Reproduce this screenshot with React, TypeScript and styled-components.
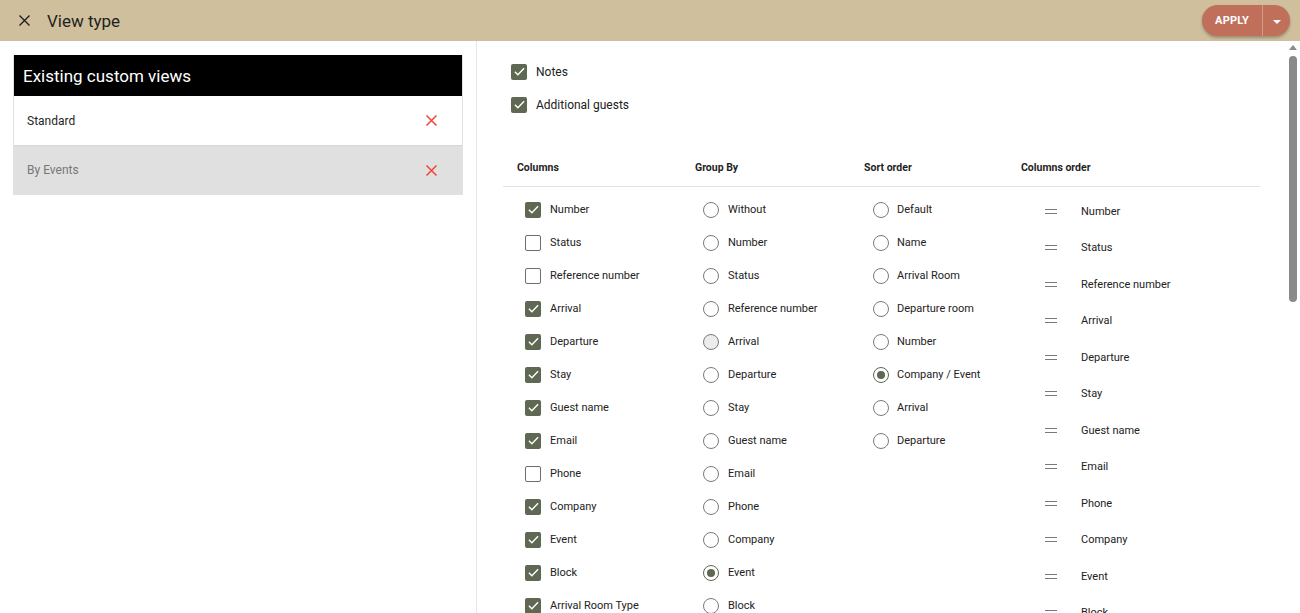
import React from 'react';
import styled, { createGlobalStyle } from 'styled-components';

const GlobalStyle = createGlobalStyle`
  html, body {
    margin: 0;
    padding: 0;
    height: 100%;
    overflow: hidden;
  }
  body {
    font-family: Roboto, "Liberation Sans", Arial, sans-serif;
    color: #212121;
    background: #fff;
  }
`;

const Page = styled.div`
  display: flex;
  flex-direction: column;
  height: 100vh;
`;

const TopBar = styled.header`
  height: 41px;
  flex: 0 0 41px;
  background: #cfbf9d;
  display: flex;
  align-items: center;
  padding: 0 10px 0 16px;
  box-sizing: border-box;
`;

const CloseButton = styled.button`
  border: 0;
  background: none;
  padding: 0;
  width: 16px;
  height: 16px;
  display: flex;
  align-items: center;
  justify-content: center;
  cursor: pointer;
`;

const Title = styled.h1`
  margin: 0 0 0 15px;
  font-size: 17px;
  font-weight: 400;
  color: #1f1f1f;
  flex: 1;
`;

const SplitButton = styled.div`
  display: flex;
  height: 31px;
  border-radius: 16px;
  background: #c0705a;
  box-shadow: 0 2px 3px rgba(0, 0, 0, 0.25);
  overflow: hidden;
`;

const ApplyButton = styled.button`
  border: 0;
  background: none;
  color: #fff;
  font-family: inherit;
  font-weight: 700;
  font-size: 11px;
  letter-spacing: 0.2px;
  padding: 0 13px 0 13px;
  border-right: 1px solid rgba(255, 255, 255, 0.3);
`;

const ArrowButton = styled.button`
  border: 0;
  background: none;
  width: 27px;
  display: flex;
  align-items: center;
  justify-content: center;
  padding: 0;
`;

const Caret = styled.span`
  width: 0;
  height: 0;
  border-left: 4px solid transparent;
  border-right: 4px solid transparent;
  border-top: 4px solid #fff;
  margin-top: 2px;
`;

const Body = styled.div`
  flex: 1;
  display: flex;
  min-height: 0;
`;

const Sidebar = styled.aside`
  width: 477px;
  flex: 0 0 477px;
  border-right: 1px solid #e6e6e6;
  padding: 14px 13px 0 13px;
  box-sizing: border-box;
`;

const ViewsCard = styled.section`
  border: 1px solid #e2e2e2;
  border-top: 0;
`;

const ViewsHeader = styled.h2`
  margin: 0;
  background: #000;
  color: #fff;
  height: 41px;
  display: flex;
  align-items: center;
  padding-left: 9px;
  font-size: 17px;
  font-weight: 400;
`;

const ViewRow = styled.div<{ $active?: boolean }>`
  height: 49px;
  display: flex;
  align-items: center;
  justify-content: space-between;
  padding: 0 23px 0 13px;
  font-size: 12px;
  background: ${(p) => (p.$active ? '#e0e0e0' : '#fff')};
  color: ${(p) => (p.$active ? '#777' : '#1f1f1f')};
  & + & {
    border-top: 1px solid #d6d6d6;
    height: 48px;
  }
`;

const Main = styled.main`
  flex: 1;
  display: flex;
  min-width: 0;
  overflow: hidden;
`;

const Content = styled.div`
  flex: 1;
  padding: 14px 27px 0 26px;
  min-width: 0;
`;

const Rail = styled.div`
  width: 12px;
  flex: 0 0 12px;
  display: flex;
  flex-direction: column;
  align-items: center;
  padding-top: 4px;
  margin-right: 1px;
`;

const RailArrow = styled.span`
  width: 0;
  height: 0;
  border-left: 4px solid transparent;
  border-right: 4px solid transparent;
  border-bottom: 5px solid #8a8a8a;
`;

const Thumb = styled.div`
  margin-top: 6px;
  width: 8px;
  height: 246px;
  border-radius: 4px;
  background: #8a8a8a;
`;

const Options = styled.div`
  padding-left: 8px;
`;

const OptionRow = styled.label<{ $size?: number }>`
  height: 33px;
  display: flex;
  align-items: center;
  font-size: ${(p) => p.$size ?? 12}px;
  color: #222;
  gap: 9px;
`;

const Box = styled.span<{ $checked?: boolean }>`
  width: 16px;
  height: 16px;
  box-sizing: border-box;
  border-radius: 2px;
  border: ${(p) => (p.$checked ? 'none' : '1.5px solid #6e6e6e')};
  background: ${(p) => (p.$checked ? '#5e6852' : '#fff')};
  display: inline-flex;
  align-items: center;
  justify-content: center;
  flex: 0 0 16px;
`;

const Radio = styled.span<{ $checked?: boolean; $hover?: boolean }>`
  width: 16px;
  height: 16px;
  box-sizing: border-box;
  border-radius: 50%;
  border: 1.5px solid ${(p) => (p.$checked ? '#5e6852' : '#7a7a7a')};
  background: ${(p) => (p.$hover ? '#ececec' : '#fff')};
  display: inline-flex;
  align-items: center;
  justify-content: center;
  flex: 0 0 16px;
  &::after {
    content: '';
    width: 8px;
    height: 8px;
    border-radius: 50%;
    background: #5e6852;
    display: ${(p) => (p.$checked ? 'block' : 'none')};
  }
`;

const Table = styled.div`
  margin-top: 27px;
`;

const HeadRow = styled.div`
  height: 38px;
  border-bottom: 1px solid #e3e3e3;
  display: grid;
  grid-template-columns: 178px 169px 157px 1fr;
  align-items: center;
  padding-left: 14px;
  font-size: 10.5px;
  font-weight: 700;
  color: #1f1f1f;
`;

const Columns = styled.div`
  display: grid;
  grid-template-columns: 178px 169px 157px 1fr;
  padding: 6px 0 0 14px;
`;

const Col = styled.div<{ $indent: number }>`
  padding-left: ${(p) => p.$indent}px;
  display: flex;
  flex-direction: column;
`;

const ColLabel = styled.span<{ $gap: number }>`
  margin-left: ${(p) => p.$gap}px;
`;

const OrderRow = styled.div`
  height: 36.5px;
  display: flex;
  align-items: center;
  font-size: 11px;
  color: #222;
`;

const Handle = styled.span`
  width: 12px;
  height: 5px;
  border-top: 1.5px solid #7a7a7a;
  border-bottom: 1.5px solid #7a7a7a;
  margin-right: 24px;
  box-sizing: border-box;
`;

const Check = () => (
  <svg width="13" height="13" viewBox="0 0 24 24" fill="none">
    <path d="M3.5 12.5l5.5 5.5L20.5 6" stroke="#fff" strokeWidth="2.6" />
  </svg>
);

const XIcon = ({ color, size, weight = 2.2 }: { color: string; size: number; weight?: number }) => (
  <svg width={size} height={size} viewBox="0 0 24 24" fill="none">
    <path d="M4 4l16 16M20 4L4 20" stroke={color} strokeWidth={weight} />
  </svg>
);

const columnItems: [string, boolean][] = [
  ['Number', true],
  ['Status', false],
  ['Reference number', false],
  ['Arrival', true],
  ['Departure', true],
  ['Stay', true],
  ['Guest name', true],
  ['Email', true],
  ['Phone', false],
  ['Company', true],
  ['Event', true],
  ['Block', true],
  ['Arrival Room Type', true],
];

const groupItems = [
  'Without',
  'Number',
  'Status',
  'Reference number',
  'Arrival',
  'Departure',
  'Stay',
  'Guest name',
  'Email',
  'Phone',
  'Company',
  'Event',
  'Block',
];

const sortItems = [
  'Default',
  'Name',
  'Arrival Room',
  'Departure room',
  'Number',
  'Company / Event',
  'Arrival',
  'Departure',
];

const orderItems = [
  'Number',
  'Status',
  'Reference number',
  'Arrival',
  'Departure',
  'Stay',
  'Guest name',
  'Email',
  'Phone',
  'Company',
  'Event',
  'Block',
];

const App = () => (
  <Page>
    <GlobalStyle />
    <TopBar>
      <CloseButton>
        <XIcon color="#1f1f1f" size={15} />
      </CloseButton>
      <Title>View type</Title>
      <SplitButton>
        <ApplyButton>APPLY</ApplyButton>
        <ArrowButton>
          <Caret />
        </ArrowButton>
      </SplitButton>
    </TopBar>
    <Body>
      <Sidebar>
        <ViewsCard>
          <ViewsHeader>Existing custom views</ViewsHeader>
          <ViewRow>
            Standard
            <XIcon color="#f44336" size={15} weight={2.4} />
          </ViewRow>
          <ViewRow $active>
            By Events
            <XIcon color="#f44336" size={15} weight={2.4} />
          </ViewRow>
        </ViewsCard>
      </Sidebar>
      <Main>
        <Content>
          <Options>
            <OptionRow>
              <Box $checked>
                <Check />
              </Box>
              Notes
            </OptionRow>
            <OptionRow>
              <Box $checked>
                <Check />
              </Box>
              Additional guests
            </OptionRow>
          </Options>
          <Table>
            <HeadRow>
              <span>Columns</span>
              <span>Group By</span>
              <span>Sort order</span>
              <span>Columns order</span>
            </HeadRow>
            <Columns>
              <Col $indent={8}>
                {columnItems.map(([name, on]) => (
                  <OptionRow key={name} $size={11}>
                    <Box $checked={on}>{on && <Check />}</Box>
                    {name}
                  </OptionRow>
                ))}
              </Col>
              <Col $indent={8}>
                {groupItems.map((name) => (
                  <OptionRow key={name} $size={11}>
                    <Radio $checked={name === 'Event'} $hover={name === 'Arrival'} />
                    {name}
                  </OptionRow>
                ))}
              </Col>
              <Col $indent={9}>
                {sortItems.map((name) => (
                  <OptionRow key={name} $size={11}>
                    <Radio $checked={name === 'Company / Event'} />
                    <ColLabel $gap={-1}>{name}</ColLabel>
                  </OptionRow>
                ))}
              </Col>
              <Col $indent={24}>
                {orderItems.map((name) => (
                  <OrderRow key={name}>
                    <Handle />
                    {name}
                  </OrderRow>
                ))}
              </Col>
            </Columns>
          </Table>
        </Content>
        <Rail>
          <RailArrow />
          <Thumb />
        </Rail>
      </Main>
    </Body>
  </Page>
);

export default App;
